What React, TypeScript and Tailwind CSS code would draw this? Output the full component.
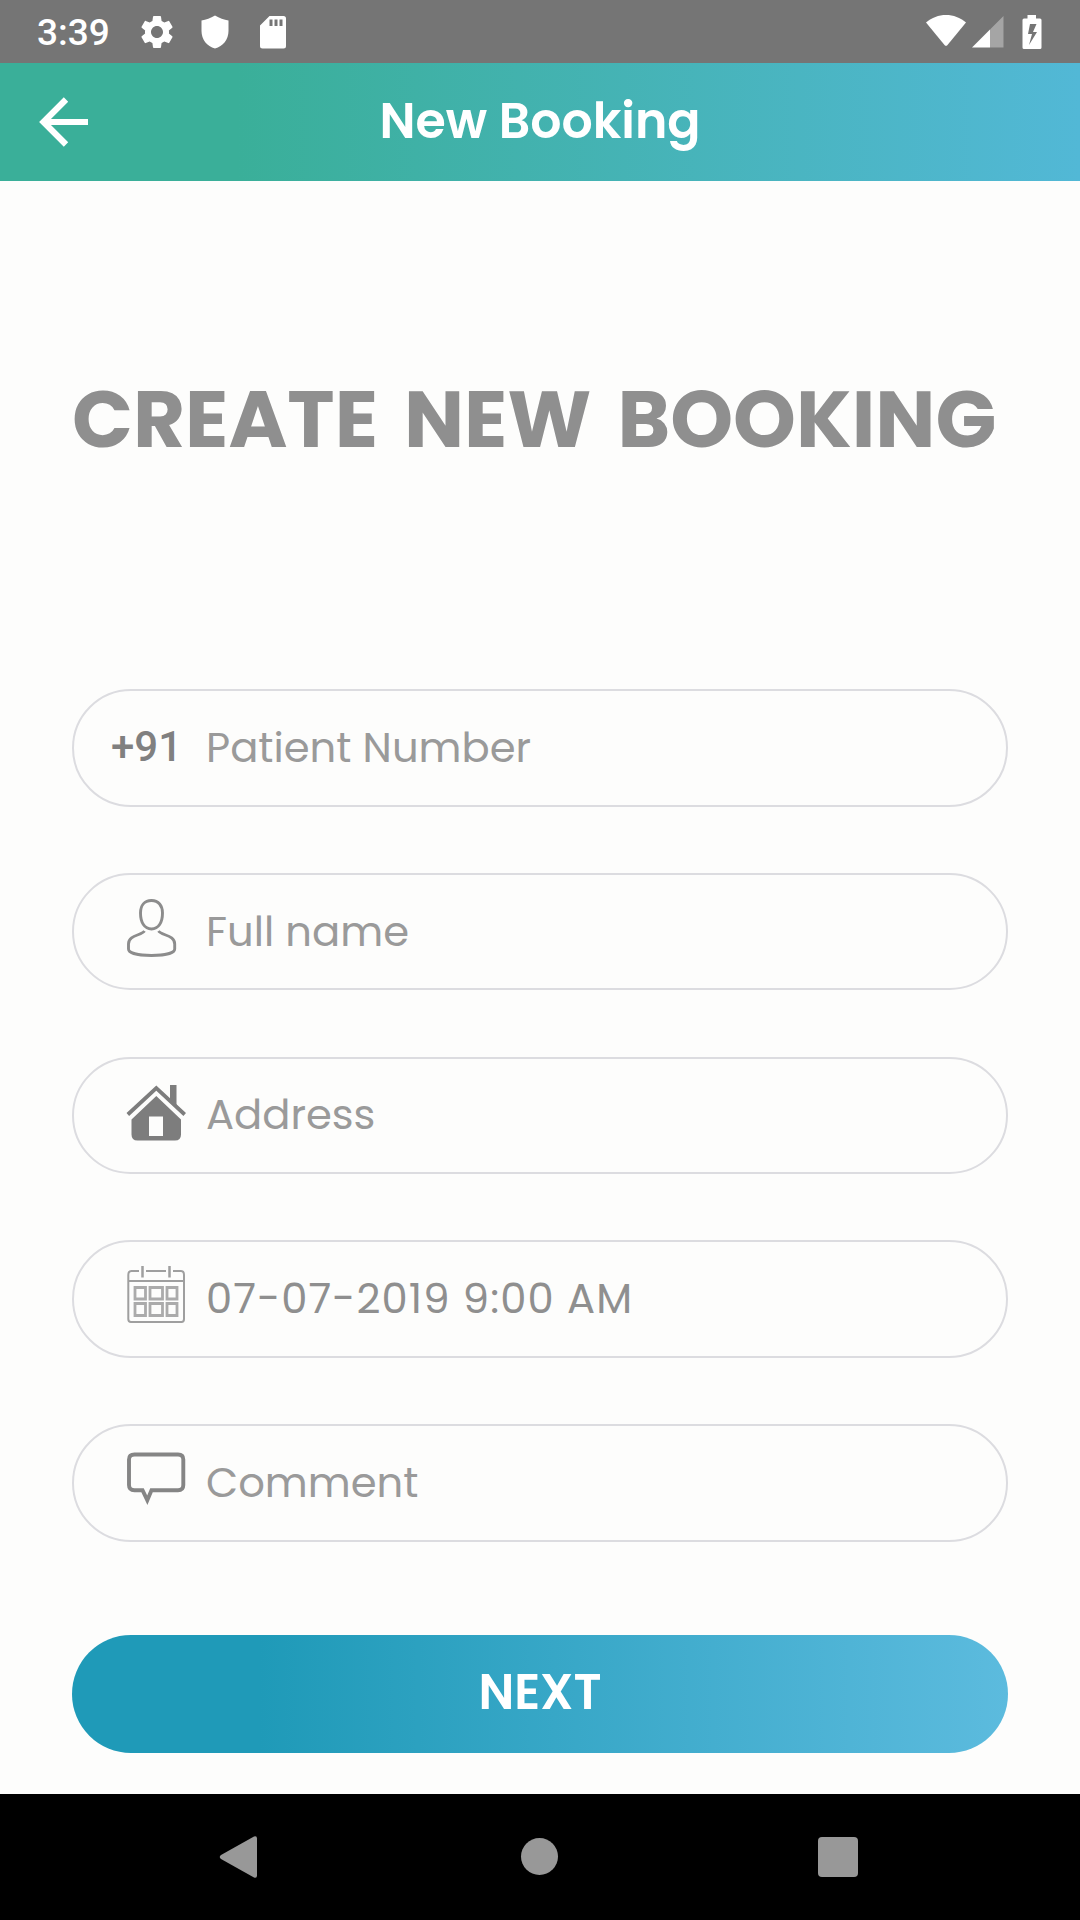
import React from "react";
import { MdSettings } from "react-icons/md";

const fieldIcon = "ml-[52px] h-[60px] w-[60px]";

function PersonIcon() {
  return (
    <svg className={fieldIcon} viewBox="0 0 60 60" fill="none" stroke="#8c8c8c" strokeWidth="2.9">
      <path d="M25.500 2.500C18.500 2.500 14.500 7.500 14.500 15C14.500 24.500 18.500 31 25.500 31C32.500 31 36.500 24.500 36.500 15C36.500 7.500 32.500 2.500 25.500 2.500Z" />
      <path d="M18.500 33C15.500 37.500 2.500 37 2.500 46V51C2.500 55 12 57.500 25.500 57.500C39 57.500 48.700 55 48.700 51V46C48.700 37 35.500 37.500 32.500 33" />
    </svg>
  );
}

function HomeIcon() {
  return (
    <svg className={fieldIcon} viewBox="0 0 60 60" fill="#7d7d7d">
      <path d="M44 3H50.500V25L44 19Z" />
      <path d="M1.800 32.500L30.300 6L58.700 32.500" fill="none" stroke="#7d7d7d" strokeWidth="3.800" />
      <path d="M30.300 14L55 37.500V52.500Q55 58.500 49 58.500H11.500Q5.500 58.500 5.500 52.500V37.500ZM23 34.500V54H37V34.500Z" fillRule="evenodd" />
    </svg>
  );
}

function CalendarIcon() {
  return (
    <svg className={fieldIcon} viewBox="0 0 60 60" fill="none" stroke="#9f9f9f" strokeWidth="2">
      <path d="M13 6H5.500Q2.300 6 2.300 10V16H58V10Q58 6 55 6H47M40 6H20M2.300 16V54Q2.300 57 5 57H55.500Q58 57 58 54V16" />
      <path d="M16.500 1V12.500M43.500 1V12.500" strokeWidth="2.500" />
      <path d="M9 22.500H19.500V34H9ZM24 22.500H36.500V34H24ZM41 22.500H51V34H41ZM9 38.500H19.500V50.500H9ZM24 38.500H36.500V50.500H24ZM41 38.500H51V50.500H41Z" strokeWidth="2.800" stroke="#ababab" />
    </svg>
  );
}

function CommentIcon() {
  return (
    <svg className={fieldIcon} viewBox="0 0 60 60" fill="none" stroke="#858585" strokeWidth="3.900">
      <path d="M8.500 5.500H52Q57.300 5.500 57.300 10.500V36Q57.300 41.200 52 41.200H25.500L21.300 51.200L16.500 41.200H8.500Q3 41.200 3 36V10.500Q3 5.500 8.500 5.500Z" />
    </svg>
  );
}

function StatusBar() {
  return (
    <div className="flex h-[63px] shrink-0 items-center bg-[#757575] pl-[37px] text-white">
      <span className="pt-[1px] font-[Roboto,sans-serif] text-[37px] leading-none font-medium">3:39</span>
      <MdSettings className="ml-[27px] h-[40px] w-[40px]" />
      <svg className="ml-[24px] h-[34px] w-[28px]" viewBox="0 0 28 34" fill="currentColor">
        <path d="M14 0.500C18.500 3 23 4.800 27.500 5.500V16C27.500 24.500 22 31.500 14 33.500C6 31.500 0.500 24.500 0.500 16V5.500C5 4.800 9.500 3 14 0.500Z" />
      </svg>
      <svg className="ml-[31px] h-[34px] w-[26px]" viewBox="0 0 26 34" fill="currentColor">
        <path fillRule="evenodd" d="M9.500 1H23.500Q26 1 26 3.500V31Q26 33.500 23.500 33.500H2.500Q0 33.500 0 31V10.500ZM9.500 4.500V11H12.500V4.500ZM14.500 4.500V11H17.500V4.500ZM19.500 4.500V11H22.500V4.500Z" />
      </svg>
      <svg className="ml-auto h-[34px] w-[42px]" viewBox="0 0 42 34" fill="currentColor">
        <path d="M1 7.500C7 2.500 13.500 0 21 0C28.500 0 35 2.500 41 7.500L22.500 30Q21 31.700 19.500 30Z" />
      </svg>
      <svg className="ml-[5px] h-[34px] w-[32px]" viewBox="0 0 32 34" fill="currentColor">
        <path d="M31.500 1V32.500H18V14.500Z" fillOpacity="0.35" />
        <path d="M18 14.500V32.500H0Z" />
      </svg>
      <svg className="mr-[38px] ml-[18px] h-[36px] w-[20px]" viewBox="0 0 20 36" fill="currentColor">
        <path fillRule="evenodd" d="M5.500 1H14V4.500H18Q19.500 4.500 19.500 6V33.500Q19.500 35 18 35H2Q0.500 35 0.500 33.500V6Q0.500 4.500 2 4.500H5.500ZM8 10L6 20H10L7 31L15 18H11L14.500 10Z" />
      </svg>
    </div>
  );
}

const fields = [
  { text: "Patient Number", icon: null, cls: "text-[#9a9a9a]" },
  { text: "Full name", icon: <PersonIcon />, cls: "text-[#9a9a9a]" },
  { text: "Address", icon: <HomeIcon />, cls: "text-[#9a9a9a]" },
  { text: "07-07-2019 9:00 AM", icon: <CalendarIcon />, cls: "text-[#8f8f8f] tracking-[1.1px]" },
  { text: "Comment", icon: <CommentIcon />, cls: "text-[#9a9a9a]" },
];

export default function App() {
  return (
    <div className="flex h-[1920px] w-[1080px] flex-col overflow-hidden bg-[#fdfdfc] font-[Poppins,sans-serif] whitespace-nowrap">
      <StatusBar />
      <header className="grid h-[118px] shrink-0 grid-cols-[1fr_auto_1fr] items-center bg-[linear-gradient(90deg,#3aaf99_0%,#3aaf99_22%,#52b8d6_100%)]">
        <svg className="ml-[39px] h-[50px] w-[50px]" viewBox="0 0 50 50" fill="none" stroke="white" strokeWidth="6.200">
          <path d="M49 25H5M27 2.500L4.500 25L27 47.500" />
        </svg>
        <h2 className="pb-[2px] text-[49px] leading-none font-semibold text-white">New Booking</h2>
      </header>
      <h1 className="mt-[190px] pl-[72px] text-[80px] leading-[96px] font-bold text-[#8f8f8f] [word-spacing:9px]">CREATE NEW BOOKING</h1>
      <div className="mt-[222px] flex flex-col gap-[66.3px] px-[72px]">
        {fields.map((f) => (
          <div key={f.text} className="flex h-[117.5px] items-center rounded-full border-2 border-[#dcdce0]">
            <div className={f.icon ? "mt-[23px] w-[132px] shrink-0 self-start" : "w-[132px] shrink-0 pb-[2px]"}>
              {f.icon ?? <span className="ml-[37px] font-[Roboto,sans-serif] text-[42px] font-medium text-[#808080]">+91</span>}
            </div>
            <span className={`text-[41.7px] leading-none ${f.cls}`}>{f.text}</span>
          </div>
        ))}
      </div>
      <button className="mx-[72px] mt-[93px] h-[118px] shrink-0 rounded-full bg-[linear-gradient(90deg,#1f9ab8_0%,#1f9ab8_20%,#5cbbde_100%)] pb-[2px] text-[48.7px] leading-none font-semibold text-white">
        NEXT
      </button>
      <nav className="mt-auto flex h-[126px] shrink-0 items-center bg-black pb-[1px] text-[#989898]">
        <svg className="ml-[219px] h-[44px] w-[40px]" viewBox="0 0 40 44" fill="currentColor">
          <path d="M2 20L35 1.500Q38 0.500 38 3.500V40.500Q38 43.500 35 42.500L2 24Q-0.500 22 2 20Z" />
        </svg>
        <div className="ml-[262px] h-[37px] w-[37px] rounded-full bg-current" />
        <div className="ml-[260px] h-[40px] w-[40px] rounded-[4px] bg-current" />
      </nav>
    </div>
  );
}
